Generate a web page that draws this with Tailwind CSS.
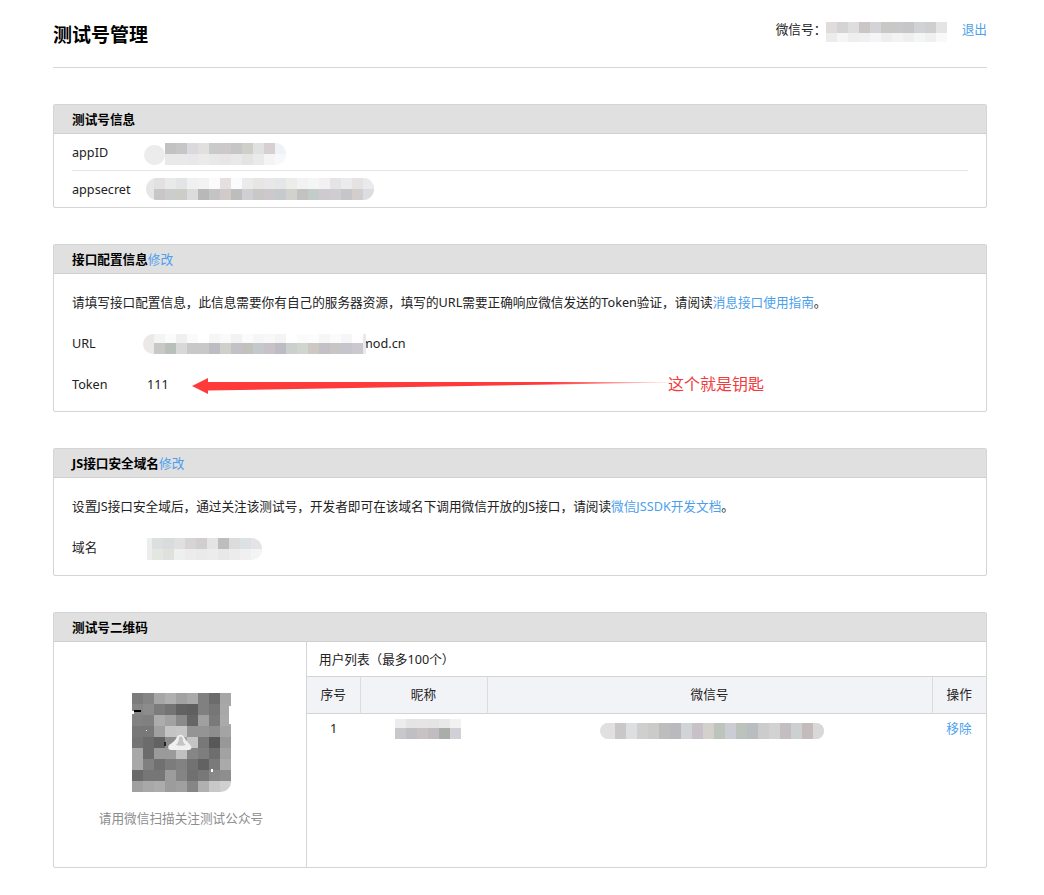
<!DOCTYPE html>
<html lang="zh-CN">
  <head>
    <meta charset="UTF-8" />
    <title>测试号管理</title>
    <script src="https://cdn.jsdelivr.net/npm/@tailwindcss/browser@4"></script>
  </head>
  <body class="bg-white text-[12.65px] text-[#222] font-['Noto_Sans','Noto_Sans_CJK_SC',sans-serif]">
    <div class="mx-[53px] w-[934px] pb-[27px]">
      <!-- Header -->
      <header class="flex justify-between h-[68px] border-b border-[#d6d6d6]">
        <h1 class="mt-[21px] h-[28px] text-[19px] leading-[28px] font-bold text-black">测试号管理</h1>
        <div class="flex items-start pt-[19px] leading-[20px]">
          <span class="w-[50px] whitespace-nowrap">微信号：</span>
          <span class="mt-[3px] flex flex-col w-[122px]">
            <span class="flex h-[11px]">
              <i class="w-[11px] bg-[#e0dcdc]"></i><i class="w-[11px] bg-[#d4d4d4]"></i><i class="w-[11px] bg-[#dedede]"></i><i class="w-[11px] bg-[#cbc6c6]"></i><i class="w-[11px] bg-[#d4d4d8]"></i><i class="w-[11px] bg-[#c8c8c6]"></i><i class="w-[11px] bg-[#c8c8c8]"></i><i class="w-[11px] bg-[#c6c6c8]"></i><i class="w-[11px] bg-[#d0d2d6]"></i><i class="w-[11px] bg-[#cfcfcf]"></i><i class="w-[11px] bg-[#e2e4e6]"></i>
            </span>
            <span class="flex h-[9px]">
              <i class="w-[11px] bg-[#ececec]"></i><i class="w-[11px] bg-[#f5f5f5]"></i><i class="w-[11px] bg-[#eeeeef]"></i><i class="w-[11px] bg-[#f0f0f0]"></i><i class="w-[11px] bg-[#f4f5f6]"></i><i class="w-[11px] bg-[#eeeeee]"></i><i class="w-[11px] bg-[#f3f3f3]"></i><i class="w-[11px] bg-[#efefed]"></i><i class="w-[11px] bg-[#f4f5f7]"></i><i class="w-[11px] bg-[#f0f1ef]"></i><i class="w-[11px] bg-[#f8fafa]"></i>
            </span>
          </span>
          <a href="#" class="ml-[14px] whitespace-nowrap text-[#4d9fec]">退出</a>
        </div>
      </header>

      <!-- 测试号信息 -->
      <section class="mt-[36px] border border-[#d4d4d4] rounded-[2px]">
        <h2 class="h-[29px] px-[18px] leading-[28px] font-bold text-black bg-[#e0e0e0] border-b border-[#cfcfcf]">测试号信息</h2>
        <div class="mx-[18px] h-[37px] flex items-center border-b border-[#e6e6e6]">
          <span class="w-[72px] pt-[1px]">appID</span>
          <span class="mt-[3px] flex items-end">
            <span class="w-[21px] h-[20px] rounded-full bg-[#ececec]"></span>
            <span class="flex flex-col rounded-r-[10px] overflow-hidden">
              <span class="flex h-[11px]">
                <i class="w-[11px] bg-[#c2c2c2]"></i><i class="w-[11px] bg-[#c6c6c6]"></i><i class="w-[11px] bg-[#dadade]"></i><i class="w-[11px] bg-[#e2dfdf]"></i><i class="w-[11px] bg-[#cacaca]"></i><i class="w-[11px] bg-[#ccc8cb]"></i><i class="w-[11px] bg-[#c6c6c6]"></i><i class="w-[11px] bg-[#cfcfca]"></i><i class="w-[11px] bg-[#e0e1e1]"></i><i class="w-[11px] bg-[#d8d0d0]"></i><i class="w-[11px] bg-[#eef3f6]"></i>
              </span>
              <span class="flex h-[11px]">
                <i class="w-[11px] bg-[#e8e9e9]"></i><i class="w-[11px] bg-[#e8e9e9]"></i><i class="w-[11px] bg-[#e8e8ea]"></i><i class="w-[11px] bg-[#ebebeb]"></i><i class="w-[11px] bg-[#e8e8ea]"></i><i class="w-[11px] bg-[#e6e6e6]"></i><i class="w-[11px] bg-[#e9e9e9]"></i><i class="w-[11px] bg-[#e4e4e4]"></i><i class="w-[11px] bg-[#e9eaea]"></i><i class="w-[11px] bg-[#f4f4f4]"></i><i class="w-[11px] bg-[#f6f9fb]"></i>
              </span>
            </span>
          </span>
        </div>
        <div class="mx-[18px] h-[36px] flex items-center">
          <span class="w-[74px] pt-[1px]">appsecret</span>
          <span class="flex flex-col pl-[8px] bg-[#e6e6e6] rounded-full overflow-hidden">
            <span class="flex h-[11px]">
              <i class="w-[11px] bg-[#e2e0e0]"></i><i class="w-[11px] bg-[#e8e9e9]"></i><i class="w-[11px] bg-[#e2e4e6]"></i><i class="w-[11px] bg-[#f0f0f0]"></i><i class="w-[11px] bg-[#f2f2f2]"></i><i class="w-[11px] bg-[#fbfbfb]"></i><i class="w-[11px] bg-[#e4e0e0]"></i><i class="w-[11px] bg-[#fafbfc]"></i><i class="w-[11px] bg-[#ebebeb]"></i><i class="w-[11px] bg-[#e8e6e4]"></i><i class="w-[11px] bg-[#e8e8e8]"></i><i class="w-[11px] bg-[#e4e6ea]"></i><i class="w-[11px] bg-[#ececea]"></i><i class="w-[11px] bg-[#f2f2f2]"></i><i class="w-[11px] bg-[#f4f6f6]"></i><i class="w-[11px] bg-[#f2f0f0]"></i><i class="w-[11px] bg-[#e4e4e6]"></i><i class="w-[11px] bg-[#ebebed]"></i><i class="w-[11px] bg-[#e4e2e2]"></i><i class="w-[11px] bg-[#eaeaec]"></i>
            </span>
            <span class="flex h-[11px]">
              <i class="w-[11px] bg-[#c8c6c6]"></i><i class="w-[11px] bg-[#cbcdcd]"></i><i class="w-[11px] bg-[#cdcdc8]"></i><i class="w-[11px] bg-[#dcdcde]"></i><i class="w-[11px] bg-[#b8b8b8]"></i><i class="w-[11px] bg-[#c4c4c4]"></i><i class="w-[11px] bg-[#d0cac8]"></i><i class="w-[11px] bg-[#bdbdbd]"></i><i class="w-[11px] bg-[#d0d0d4]"></i><i class="w-[11px] bg-[#c8c8c6]"></i><i class="w-[11px] bg-[#cdc8cc]"></i><i class="w-[11px] bg-[#c6cacc]"></i><i class="w-[11px] bg-[#d2d2cc]"></i><i class="w-[11px] bg-[#c2c2c0]"></i><i class="w-[11px] bg-[#c4cccb]"></i><i class="w-[11px] bg-[#cfcacf]"></i><i class="w-[11px] bg-[#cfcdd0]"></i><i class="w-[11px] bg-[#c6c6ca]"></i><i class="w-[11px] bg-[#d2cecc]"></i><i class="w-[11px] bg-[#dcdde2]"></i>
            </span>
          </span>
        </div>
      </section>

      <!-- 接口配置信息 -->
      <section class="relative mt-[36px] border border-[#d4d4d4] rounded-[2px]">
        <h2 class="h-[29px] px-[18px] leading-[28px] font-bold text-black bg-[#e0e0e0] border-b border-[#cfcfcf]">接口配置信息<a href="#" class="font-normal text-[#4d9fec]">修改</a></h2>
        <div class="px-[18px] pb-[13px]">
          <p class="h-[56px] leading-[56px] whitespace-nowrap">请填写接口配置信息，此信息需要你有自己的服务器资源，填写的URL需要正确响应微信发送的Token验证，请阅读<a href="#" class="text-[#4d9fec]">消息接口使用指南</a>。</p>
          <div class="h-[27px] flex items-center">
            <span class="w-[71px]">URL</span>
            <span class="relative z-10 flex flex-col pl-[11px] pr-[3px] bg-[#ebe9e8] rounded-l-full">
              <span class="flex h-[9px]">
                <i class="w-[11px] bg-[#f4f4f4]"></i><i class="w-[11px] bg-[#fbfbfb]"></i><i class="w-[11px] bg-[#efefef]"></i><i class="w-[11px] bg-[#fafafa]"></i><i class="w-[11px] bg-[#ffffff]"></i><i class="w-[11px] bg-[#f6f6f6]"></i><i class="w-[11px] bg-[#fafafa]"></i><i class="w-[11px] bg-[#f2f2f2]"></i><i class="w-[11px] bg-[#fbfbfb]"></i><i class="w-[11px] bg-[#f6f6f6]"></i><i class="w-[11px] bg-[#f8f8f8]"></i><i class="w-[11px] bg-[#f4f4f4]"></i><i class="w-[11px] bg-[#ffffff]"></i><i class="w-[11px] bg-[#fbfbfb]"></i><i class="w-[11px] bg-[#fcfcfc]"></i><i class="w-[11px] bg-[#f6f6f6]"></i><i class="w-[11px] bg-[#fbfbfb]"></i><i class="w-[11px] bg-[#f6f6f6]"></i><i class="w-[11px] bg-[#ffffff]"></i>
              </span>
              <span class="flex h-[11px]">
                <i class="w-[11px] bg-[#c8c8c6]"></i><i class="w-[11px] bg-[#b9c0bc]"></i><i class="w-[11px] bg-[#d8d8d6]"></i><i class="w-[11px] bg-[#c8c8c8]"></i><i class="w-[11px] bg-[#c8c8c8]"></i><i class="w-[11px] bg-[#bcbcc2]"></i><i class="w-[11px] bg-[#d0d0ca]"></i><i class="w-[11px] bg-[#c4c0c8]"></i><i class="w-[11px] bg-[#c2c2ba]"></i><i class="w-[11px] bg-[#c2c8cc]"></i><i class="w-[11px] bg-[#c8c2c8]"></i><i class="w-[11px] bg-[#bcbcc4]"></i><i class="w-[11px] bg-[#ccd0cc]"></i><i class="w-[11px] bg-[#d0d6ce]"></i><i class="w-[11px] bg-[#cec8c4]"></i><i class="w-[11px] bg-[#c4c0c8]"></i><i class="w-[11px] bg-[#c8c6c4]"></i><i class="w-[11px] bg-[#c6c4cc]"></i><i class="w-[11px] bg-[#ccc8d0]"></i>
              </span>
            </span>
            <span class="-ml-[5px]">mod.cn</span>
          </div>
          <div class="mt-[14px] h-[27px] flex items-center">
            <span class="w-[75px]">Token</span>
            <span>111</span>
          </div>
        </div>
        <!-- 标注箭头 -->
        <svg class="absolute left-[138px] top-[131px] overflow-visible" width="480" height="20" viewBox="192 375 480 20">
          <defs>
            <linearGradient id="arrowFade" x1="192" x2="668" y1="0" y2="0" gradientUnits="userSpaceOnUse">
              <stop offset="0" stop-color="#ff3a3a" />
              <stop offset="0.75" stop-color="#ff3a3a" />
              <stop offset="1" stop-color="#ff3a3a" stop-opacity="0.15" />
            </linearGradient>
          </defs>
          <polygon points="192,385 208,377 208,381 668,381 668,381.6 208,389.5 208,393" fill="url(#arrowFade)" />
        </svg>
        <span class="absolute left-[614px] top-[127px] text-[16px] leading-[24px] text-[#f23c3c]">这个就是钥匙</span>
      </section>

      <!-- JS接口安全域名 -->
      <section class="mt-[36px] border border-[#d4d4d4] rounded-[2px]">
        <h2 class="h-[29px] px-[18px] leading-[28px] font-bold text-black bg-[#e0e0e0] border-b border-[#cfcfcf]">JS接口安全域名<a href="#" class="font-normal text-[#4d9fec]">修改</a></h2>
        <div class="px-[18px] pb-[14px]">
          <p class="h-[56px] leading-[56px] whitespace-nowrap">设置JS接口安全域后，通过关注该测试号，开发者即可在该域名下调用微信开放的JS接口，请阅读<a href="#" class="text-[#4d9fec]">微信JSSDK开发文档</a>。</p>
          <div class="h-[27px] flex items-center">
            <span class="w-[75px]">域名</span>
            <span class="mt-[3px] flex flex-col pl-[5px] bg-[#eceeee] rounded-r-full rounded-bl-[10px] overflow-hidden">
              <span class="flex h-[11px]">
                <i class="w-[11px] bg-[#dcdfe0]"></i><i class="w-[11px] bg-[#d8dcdc]"></i><i class="w-[11px] bg-[#e0e0e0]"></i><i class="w-[11px] bg-[#d6d4d4]"></i><i class="w-[11px] bg-[#d0cece]"></i><i class="w-[11px] bg-[#e4e4e4]"></i><i class="w-[11px] bg-[#bdbdbd]"></i><i class="w-[11px] bg-[#dcdcdc]"></i><i class="w-[11px] bg-[#dce2e4]"></i><i class="w-[11px] bg-[#e4e4e6]"></i>
              </span>
              <span class="flex h-[11px]">
                <i class="w-[11px] bg-[#e4e6e2]"></i><i class="w-[11px] bg-[#dfe1dc]"></i><i class="w-[11px] bg-[#eeeff0]"></i><i class="w-[11px] bg-[#ececec]"></i><i class="w-[11px] bg-[#eaeaea]"></i><i class="w-[11px] bg-[#ececec]"></i><i class="w-[11px] bg-[#e8e8e8]"></i><i class="w-[11px] bg-[#ececec]"></i><i class="w-[11px] bg-[#f0f0f0]"></i><i class="w-[11px] bg-[#f4f4f4]"></i>
              </span>
            </span>
          </div>
        </div>
      </section>

      <!-- 测试号二维码 -->
      <section class="mt-[36px] border border-[#d4d4d4] rounded-[2px]">
        <h2 class="h-[29px] px-[18px] leading-[28px] font-bold text-black bg-[#e0e0e0] border-b border-[#cfcfcf]">测试号二维码</h2>
        <div class="flex h-[225px]">
          <div class="w-[253px] border-r border-[#d4d4d4] flex flex-col items-center pl-[2px] pt-[51px]">
            <div class="relative grid grid-cols-9 w-[99px] h-[99px]">
              <i class="bg-[#7c7c7c]"></i><i class="bg-[#858585]"></i><i class="bg-[#a6a6a6]"></i><i class="bg-[#b0b0b0]"></i><i class="bg-[#a2a2a2]"></i><i class="bg-[#aaaaaa]"></i><i class="bg-[#808080]"></i><i class="bg-[#6c6c6c]"></i><i class="bg-[#a6a6a6]"></i>
              <i class="bg-[#868686]"></i><i class="bg-[#8c8c8c]"></i><i class="bg-[#7c7c7c]"></i><i class="bg-[#747474]"></i><i class="bg-[#626262]"></i><i class="bg-[#5f5f5f]"></i><i class="bg-[#808080]"></i><i class="bg-[#767676]"></i><i class="bg-[#a8a8a8]"></i>
              <i class="bg-[#828282]"></i><i class="bg-[#808080]"></i><i class="bg-[#acacac]"></i><i class="bg-[#a2a2a2]"></i><i class="bg-[#8a8a8a]"></i><i class="bg-[#666666]"></i><i class="bg-[#a0a0a0]"></i><i class="bg-[#7a7a7a]"></i><i class="bg-[#aaaaaa]"></i>
              <i class="bg-[#787878]"></i><i class="bg-[#787878]"></i><i class="bg-[#a0a0a0]"></i><i class="bg-[#c4c4c4]"></i><i class="bg-[#c6c6c6]"></i><i class="bg-[#949494]"></i><i class="bg-[#949494]"></i><i class="bg-[#8e8e8e]"></i><i class="bg-[#a4a4a4]"></i>
              <i class="bg-[#747474]"></i><i class="bg-[#6c6c6c]"></i><i class="bg-[#626262]"></i><i class="bg-[#8c8c8c]"></i><i class="bg-[#a0a0a0]"></i><i class="bg-[#c4c4c4]"></i><i class="bg-[#787878]"></i><i class="bg-[#585858]"></i><i class="bg-[#989898]"></i>
              <i class="bg-[#a8a8a8]"></i><i class="bg-[#6c6c6c]"></i><i class="bg-[#9a9a9a]"></i><i class="bg-[#9a9a9a]"></i><i class="bg-[#c0c0c0]"></i><i class="bg-[#868686]"></i><i class="bg-[#7e7e7e]"></i><i class="bg-[#6e6e6e]"></i><i class="bg-[#a2a2a2]"></i>
              <i class="bg-[#a8a8a8]"></i><i class="bg-[#808080]"></i><i class="bg-[#707070]"></i><i class="bg-[#7c7c7c]"></i><i class="bg-[#828282]"></i><i class="bg-[#727272]"></i><i class="bg-[#626262]"></i><i class="bg-[#7a7a7a]"></i><i class="bg-[#aaaaaa]"></i>
              <i class="bg-[#6a6a6a]"></i><i class="bg-[#767676]"></i><i class="bg-[#767676]"></i><i class="bg-[#9c9c9c]"></i><i class="bg-[#848484]"></i><i class="bg-[#707070]"></i><i class="bg-[#787878]"></i><i class="bg-[#888888]"></i><i class="bg-[#8e8e8e]"></i>
              <i class="bg-[#a0a0a0]"></i><i class="bg-[#a8a8a8]"></i><i class="bg-[#acacac]"></i><i class="bg-[#9c9c9c]"></i><i class="bg-[#a0a0a0]"></i><i class="bg-[#868686]"></i><i class="bg-[#b0b0b0]"></i><i class="bg-[#c8c8c8]"></i><i class="rounded-br-[10px] bg-[#d0d0d0]"></i>
              <!-- 中心头像 -->
              <svg class="absolute left-[36px] top-[41px]" width="24" height="16" viewBox="0 0 24 16">
                <path d="M1 11C4 9 7 7 9 3C11 0 14 0 16 3C18 7 21 9 23 12C24 14 23 16 21 16H3C0 16 -0.5 13 1 11Z" fill="#f0f0f0" />
                <path d="M11 3C13 2 15 3 15 5C15 7 15 9 18 11C15 12 11 12 8 11C10 9 11 7 11 3Z" fill="#c4c4c4" />
              </svg>
              <span class="absolute left-[2px] top-[17px] w-[7px] h-[2px] bg-black"></span>
              <span class="absolute left-0 top-[18px] w-[2px] h-[3px] bg-white"></span>
              <span class="absolute left-[32px] top-[49px] w-[2px] h-[4px] bg-[#222]"></span>
              <span class="absolute right-0 top-[13px] w-[2px] h-[18px] bg-white"></span>
              <span class="absolute left-[14px] top-[37px] w-[1px] h-[1px] bg-white"></span>
              <span class="absolute left-[79px] top-[76px] w-[2px] h-[3px] bg-white"></span>
            </div>
            <p class="mt-[16px] leading-[20px] text-[#8d8d8d]">请用微信扫描关注测试公众号</p>
          </div>
          <div class="flex-1">
            <div class="h-[35px] pl-[12px] leading-[34px] border-b border-[#d4d4d4]">用户列表（最多100个）</div>
            <table class="w-full table-fixed border-collapse text-center">
              <colgroup>
                <col class="w-[53px]" />
                <col class="w-[127px]" />
                <col />
                <col class="w-[54px]" />
              </colgroup>
              <thead>
                <tr class="h-[36px] bg-[#f2f3f7] border-b border-[#d4d4d4]">
                  <th class="font-normal border-r border-[#dcdcdc]">序号</th>
                  <th class="font-normal border-r border-[#dcdcdc]">昵称</th>
                  <th class="font-normal border-r border-[#dcdcdc]">微信号</th>
                  <th class="font-normal">操作</th>
                </tr>
              </thead>
              <tbody>
                <tr class="h-[31px]">
                  <td>1</td>
                  <td class="align-top pt-[5px]">
                    <span class="ml-[8px] inline-flex flex-col align-top">
                      <span class="flex h-[9px]">
                        <i class="w-[11px] bg-[#ececec]"></i><i class="w-[11px] bg-[#e4e4e4]"></i><i class="w-[11px] bg-[#e6e4e4]"></i><i class="w-[11px] bg-[#e4e4e4]"></i><i class="w-[11px] bg-[#e8e8e8]"></i><i class="w-[11px] bg-[#f2f2f2]"></i>
                      </span>
                      <span class="flex h-[11px]">
                        <i class="w-[11px] bg-[#c8c8cc]"></i><i class="w-[11px] bg-[#c0bfc4]"></i><i class="w-[11px] bg-[#c8c2c2]"></i><i class="w-[11px] bg-[#c0bcc0]"></i><i class="w-[11px] bg-[#aaaea8]"></i><i class="w-[11px] bg-[#d0d0d6]"></i>
                      </span>
                    </span>
                  </td>
                  <td class="align-top pt-[9px]">
                    <span class="ml-[4px] pl-[4px] inline-flex h-[16px] overflow-hidden rounded-full bg-[#e2e0de] align-top">
                      <i class="w-[11px] bg-[#e2e0de]"></i><i class="w-[11px] bg-[#c8c8c8]"></i><i class="w-[11px] bg-[#dcdee0]"></i><i class="w-[11px] bg-[#cfcfcf]"></i><i class="w-[11px] bg-[#cbcbc9]"></i><i class="w-[11px] bg-[#bdbdbd]"></i><i class="w-[11px] bg-[#bababe]"></i><i class="w-[11px] bg-[#d0d4d4]"></i><i class="w-[11px] bg-[#c8c2c8]"></i><i class="w-[11px] bg-[#d4d0cc]"></i><i class="w-[11px] bg-[#bcc4bc]"></i><i class="w-[11px] bg-[#ccccd4]"></i><i class="w-[11px] bg-[#bcc2bc]"></i><i class="w-[11px] bg-[#b8bec0]"></i><i class="w-[11px] bg-[#cccccc]"></i><i class="w-[11px] bg-[#d2d2d2]"></i><i class="w-[11px] bg-[#c4bec2]"></i><i class="w-[11px] bg-[#ccd0d0]"></i><i class="w-[11px] bg-[#c4bcbc]"></i><i class="w-[11px] bg-[#d8d8d8]"></i>
                    </span>
                  </td>
                  <td><a href="#" class="text-[#4d9fec]">移除</a></td>
                </tr>
              </tbody>
            </table>
          </div>
        </div>
      </section>
    </div>
  </body>
</html>
